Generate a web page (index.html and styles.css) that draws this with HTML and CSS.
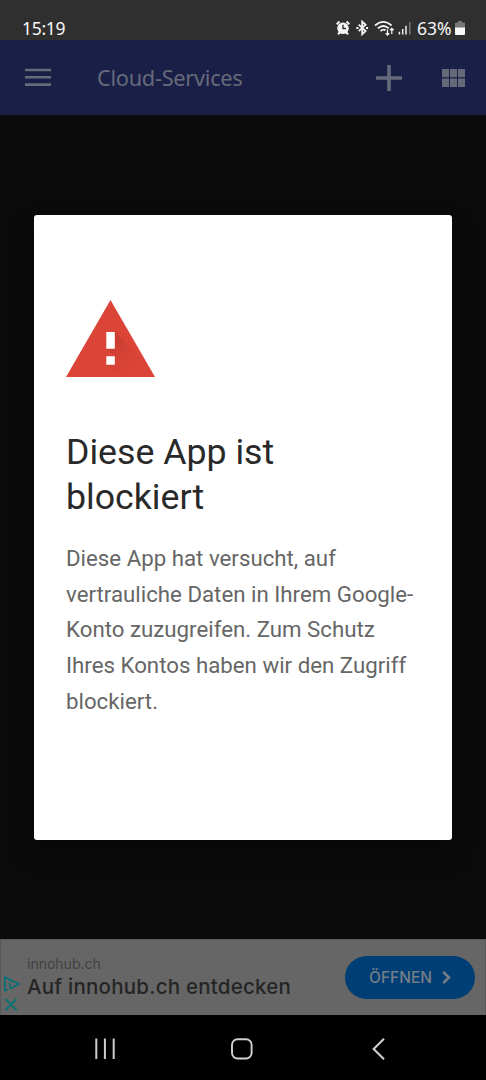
FILE: index.html
```html
<!DOCTYPE html>
<html lang="de">
<head>
<meta charset="utf-8">
<title>Cloud-Services</title>
<link rel="stylesheet" href="styles.css">
</head>
<body>
<div class="screen">
  <header class="status">
    <span class="time">15:19</span>
    <svg class="status-icons" width="78" height="20" viewBox="0 0 78 20" fill="none" stroke="#f4f4f4">
      <circle cx="8" cy="10.300" r="5.800" fill="#f4f4f4" stroke="none"/>
      <path d="M1.700 6.200 4.500 3.600M14.300 6.200 11.500 3.600M4.500 14.500 3 16.300M11.500 14.500 13 16.300" stroke-width="2"/>
      <path d="M8 6.800V10.500H11" stroke="#2f2f2f" stroke-width="1.400"/>
      <path d="M23.700 6.700 30.600 13.100 27.200 16.200V3.600L30.600 6.800 23.700 13.200" stroke-width="1.800"/>
      <path d="M21.300 10H23.500M31 10H33.100" stroke-width="2.200"/>
      <path d="M40 7.500Q48.300.300 56.600 7.500M42.800 10.400Q48.300 5.600 53.800 10.400M45.500 13Q48.300 10.700 50.500 12.300" stroke-width="1.800"/>
      <path d="M52.500 11.500V17M50.700 15.200 52.500 17 54.300 15.200M56.800 16V10.500M55 12.300 56.800 10.500 58.600 12.300" stroke-width="1.300"/>
      <path d="M64.400 13.800V16.500M67.700 11V16.500M71 7.700V16.500" stroke-width="1.500"/>
      <path d="M74.800 4V16.500" stroke="#777" stroke-width="1.500"/>
    </svg>
    <span class="percent">63%</span>
    <svg class="battery" width="10" height="15" viewBox="0 0 10 15">
      <path d="M3 0H7V1.500H9Q10 1.500 10 2.500V7H0V2.500Q0 1.500 1 1.500H3Z" fill="#777"/>
      <path d="M0 6.500H10V13Q10 14 9 14H1Q0 14 0 13Z" fill="#f7f7f7"/>
    </svg>
  </header>
  <nav class="toolbar">
    <svg class="menu" width="26" height="19" viewBox="0 0 26 19" stroke="#666a7b" stroke-width="2.600"><path d="M0 2H26M0 9.300H26M0 16.600H26"/></svg>
    <span class="toolbar-title">Cloud-Services</span>
    <svg class="plus" width="26" height="26" viewBox="0 0 26 26" stroke="#66697a" stroke-width="3.600"><path d="M0 13H26M13 0V26"/></svg>
    <svg class="grid" width="23" height="18" viewBox="0 0 23 18" fill="#66697a"><path d="M0 0H7V8.300H0ZM8 0H15V8.300H8ZM16 0H23V8.300H16ZM0 9.600H7V18H0ZM8 9.600H15V18H8ZM16 9.600H23V18H16Z"/></svg>
  </nav>
  <main class="content">
    <section class="dialog">
      <svg class="warning" width="90" height="78" viewBox="0 0 90 78">
        <defs><linearGradient id="shade" x1="0" y1="0" x2="1" y2="1"><stop offset="0" stop-color="#a92f27" stop-opacity=".6"/><stop offset=".8" stop-color="#db4437" stop-opacity="0"/></linearGradient></defs>
        <path d="M44.500 0 89 77H0Z" fill="#db4437"/>
        <path d="M49 32 72 55 83 77H54L40 65H49V56L40 49H49Z" fill="url(#shade)"/>
        <path d="M40.300 32H48.800V48.700H40.300ZM40.300 56.300H48.800V64.800H40.300Z" fill="#fff"/>
      </svg>
      <h1 class="dialog-title">Diese App ist<br>blockiert</h1>
      <p class="dialog-text">Diese App hat versucht, auf<br>vertrauliche Daten in Ihrem Google-<br>Konto zuzugreifen. Zum Schutz<br>Ihres Kontos haben wir den Zugriff<br>blockiert.</p>
    </section>
  </main>
  <aside class="ad">
    <div class="ad-marks">
      <svg width="16" height="16" viewBox="0 0 16 16" fill="none" stroke="#087174" stroke-width="1.700" stroke-linejoin="round"><path d="M.900 15V1L15 8 6 12.800M.900 15 3.500 13.800M5.800 7V11.500M5.800 4.300V5.700"/></svg>
      <svg width="14" height="13" viewBox="0 0 14 13" fill="none" stroke="#087174" stroke-width="1.800"><path d="M1.500 1 12.500 12M12.500 1 1.500 12"/></svg>
    </div>
    <div class="ad-copy">
      <div class="ad-domain">innohub.ch</div>
      <div class="ad-title">Auf innohub.ch entdecken</div>
    </div>
    <div class="ad-button"><span class="ad-label">ÖFFNEN</span>
      <svg width="9" height="13" viewBox="0 0 9 13" fill="none" stroke="#777d85" stroke-width="2.500"><path d="M1.200 1 7 6.500 1.200 12"/></svg>
    </div>
  </aside>
  <footer class="navbar">
    <svg width="20" height="22" viewBox="0 0 20 22" stroke="#ccc" stroke-width="2"><path d="M1.300 .500V21M9.900 .500V21M18.700 .500V21"/></svg>
    <svg class="home" width="22" height="22" viewBox="0 0 22 22" fill="none" stroke="#d2d2d2" stroke-width="1.900"><rect x="1" y="1.200" width="19.600" height="19.300" rx="5.500"/></svg>
    <svg class="back" width="13" height="22" viewBox="0 0 13 22" fill="none" stroke="#d2d2d2" stroke-width="2"><path d="M12 .800 1.600 11 12 21.200"/></svg>
  </footer>
</div>
</body>
</html>
```
FILE: styles.css
```css
* { box-sizing: border-box; }
body { margin: 0; background: #0b0b0b; }
svg { display: block; flex: none; }
.screen { width: 486px; height: 1080px; display: flex; flex-direction: column; overflow: hidden; font-family: Roboto, "Liberation Sans", sans-serif; white-space: nowrap; }
.status { height: 40px; flex: none; background: #2f2f2f; color: #f7f7f7; display: flex; align-items: flex-start; padding: 18px 21px 0 22px; font-family: "Noto Sans", sans-serif; font-size: 17.5px; line-height: 20px; }
.time { width: 43px; letter-spacing: -.3px; }
.status-icons { margin-left: 270px; }
.percent { width: 36px; margin-left: 4px; }
.battery { margin: 3px 0 0 auto; }
.toolbar { height: 75px; flex: none; background: #191f46; color: #666a7b; display: flex; align-items: center; padding: 0 21px 0 25px; }
.toolbar-title { font-family: "Noto Sans", sans-serif; font-size: 21.8px; letter-spacing: -.3px; margin-left: 46px; width: 146px; line-height: 28px; }
.menu { margin-top: -1px; }
.plus { margin-left: 133px; }
.grid { margin-left: auto; }
.content { height: 825px; flex: none; padding: 100px 34px; background: #0b0b0b; }
.dialog { height: 625px; background: #fff; border-radius: 3px; padding: 85px 32px 0; box-shadow: 0 12px 25px #080808; }
.dialog-title { margin: 52px 0 0; font-size: 35.7px; line-height: 44.5px; font-weight: 400; color: #292929; }
.dialog-text { margin: 22px 0 0; font-size: 22.28px; line-height: 35.7px; color: #666; }
.ad { height: 76px; margin-top: -1px; flex: none; background: #666; border: 1px solid #585858; border-bottom: 0; display: flex; align-items: flex-start; padding: 0 10px 0 3px; font-family: Inter, sans-serif; }
.ad-marks { width: 16px; padding-top: 36px; display: flex; flex-direction: column; gap: 6px; }
.ad-copy { margin-left: 7px; padding-top: 14px; }
.ad-domain { color: #414141; font-size: 14px; line-height: 19px; }
.ad-title { color: #252525; font-size: 20.5px; letter-spacing: .23px; line-height: 27px; font-weight: 500; }
.ad-button { margin: 16px 0 0 auto; width: 130px; height: 43px; border-radius: 22px; background: #003f75; display: flex; align-items: center; padding: 0 24px; justify-content: space-between; color: #777d85; }
.ad-label { font-size: 15.5px; font-weight: 500; }
.navbar { height: 65px; flex: none; background: #000; display: flex; align-items: center; padding: 3px 101px 0 95px; }
.home { margin-left: 116px; }
.back { margin-left: auto; }
```
